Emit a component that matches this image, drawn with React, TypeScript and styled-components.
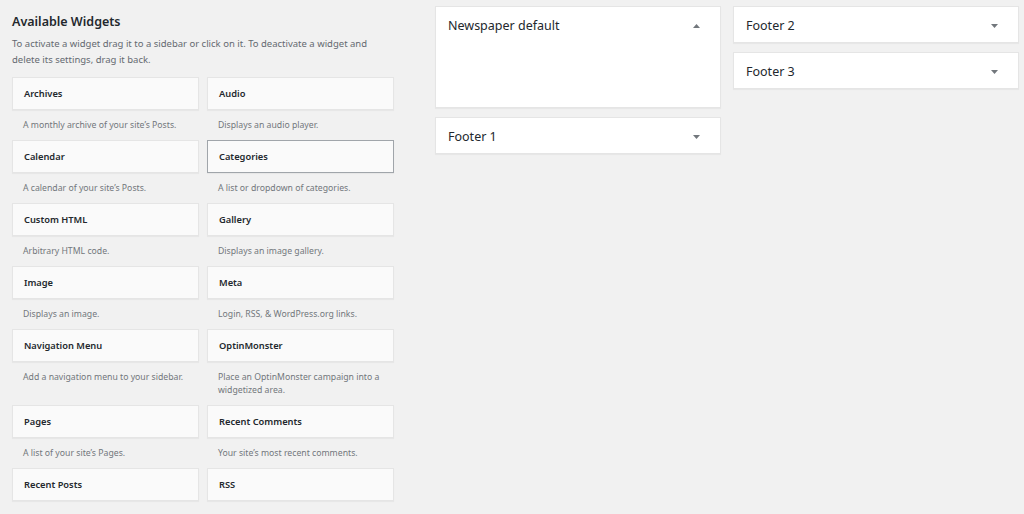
import styled, { createGlobalStyle } from "styled-components";

const GlobalStyle = createGlobalStyle`
    html, body {
        margin: 0;
        padding: 0;
        background: #f1f1f1;
    }
    body {
        font-family: "Noto Sans", "Open Sans", sans-serif;
        color: #23282d;
        width: 1024px;
        height: 514px;
        overflow: hidden;
    }
`;

type Widget = { name: string; desc: string; focused?: boolean };

const widgets: Widget[] = [
    { name: "Archives", desc: "A monthly archive of your site\u2019s Posts." },
    { name: "Audio", desc: "Displays an audio player." },
    { name: "Calendar", desc: "A calendar of your site\u2019s Posts." },
    { name: "Categories", desc: "A list or dropdown of categories.", focused: true },
    { name: "Custom HTML", desc: "Arbitrary HTML code." },
    { name: "Gallery", desc: "Displays an image gallery." },
    { name: "Image", desc: "Displays an image." },
    { name: "Meta", desc: "Login, RSS, & WordPress.org links." },
    { name: "Navigation Menu", desc: "Add a navigation menu to your sidebar." },
    { name: "OptinMonster", desc: "Place an OptinMonster campaign into a widgetized area." },
    { name: "Pages", desc: "A list of your site\u2019s Pages." },
    { name: "Recent Comments", desc: "Your site\u2019s most recent comments." },
    { name: "Recent Posts", desc: "" },
    { name: "RSS", desc: "" },
];

function Arrow({ up }: { up?: boolean }) {
    return (
        <ArrowIcon width="7" height="4" viewBox="0 0 7 4">
            {up ? <polygon points="3.5,0 7,4 0,4" /> : <polygon points="0,0 7,0 3.5,4" />}
        </ArrowIcon>
    );
}

export default function App() {
    return (
        <>
            <GlobalStyle />
            <Page>
                <Available>
                    <Heading>Available Widgets</Heading>
                    <Intro>
                        To activate a widget drag it to a sidebar or click on it. To deactivate a widget and
                        delete its settings, drag it back.
                    </Intro>
                    <WidgetGrid>
                        {widgets.map((w) => (
                            <WidgetItem key={w.name}>
                                <WidgetCard $focused={w.focused}>{w.name}</WidgetCard>
                                {w.desc && <WidgetDesc>{w.desc}</WidgetDesc>}
                            </WidgetItem>
                        ))}
                    </WidgetGrid>
                </Available>
                <SidebarColumn>
                    <Sidebar $tall>
                        <SidebarHead>
                            Newspaper default
                            <Arrow up />
                        </SidebarHead>
                    </Sidebar>
                    <Sidebar>
                        <SidebarHead>
                            Footer 1
                            <Arrow />
                        </SidebarHead>
                    </Sidebar>
                </SidebarColumn>
                <SidebarColumn>
                    <Sidebar>
                        <SidebarHead>
                            Footer 2
                            <Arrow />
                        </SidebarHead>
                    </Sidebar>
                    <Sidebar>
                        <SidebarHead>
                            Footer 3
                            <Arrow />
                        </SidebarHead>
                    </Sidebar>
                </SidebarColumn>
            </Page>
        </>
    );
}

const Page = styled.div`
    display: flex;
    align-items: flex-start;
    padding: 6px 5px 0 12px;
`;

const Available = styled.div`
    width: 382px;
    flex-shrink: 0;
    margin-right: 41px;
`;

const Heading = styled.h2`
    margin: 8px 0 0;
    font-size: 12.5px;
    font-weight: 600;
    line-height: 16px;
    color: #23282d;
`;

const Intro = styled.p`
    margin: 6px 0 0;
    font-size: 9.5px;
    line-height: 16px;
    color: #646970;
`;

const WidgetGrid = styled.div`
    display: grid;
    grid-template-columns: 187px 187px;
    column-gap: 8px;
    margin-top: 9px;
`;

const WidgetItem = styled.div`
    display: flex;
    flex-direction: column;
`;

const WidgetCard = styled.div<{ $focused?: boolean }>`
    height: 33px;
    box-sizing: border-box;
    display: flex;
    align-items: center;
    padding: 0 11px;
    background: #fafafa;
    border: 1px solid ${({ $focused }) => ($focused ? "#a0a5aa" : "#e5e5e5")};
    box-shadow: 0 1px 1px rgba(0, 0, 0, 0.04);
    font-size: 9.3px;
    font-weight: 600;
    color: #23282d;
`;

const WidgetDesc = styled.div`
    padding: 9px 6px 8px 11px;
    font-size: 8.7px;
    line-height: 13px;
    color: #72777c;
`;

const SidebarColumn = styled.div`
    width: 286px;
    flex-shrink: 0;
    display: flex;
    flex-direction: column;
    gap: 9px;
    & + & {
        margin-left: 12px;
    }
`;

const Sidebar = styled.div<{ $tall?: boolean }>`
    background: #fff;
    border: 1px solid #e5e5e5;
    box-shadow: 0 1px 1px rgba(0, 0, 0, 0.04);
    height: ${({ $tall }) => ($tall ? "102px" : "37px")};
    box-sizing: border-box;
`;

const SidebarHead = styled.h3`
    margin: 0;
    height: 37px;
    display: flex;
    align-items: center;
    justify-content: space-between;
    padding: 0 20px 0 12px;
    font-size: 12.5px;
    font-weight: 400;
    color: #23282d;
`;

const ArrowIcon = styled.svg`
    fill: #72777c;
    flex-shrink: 0;
`;
